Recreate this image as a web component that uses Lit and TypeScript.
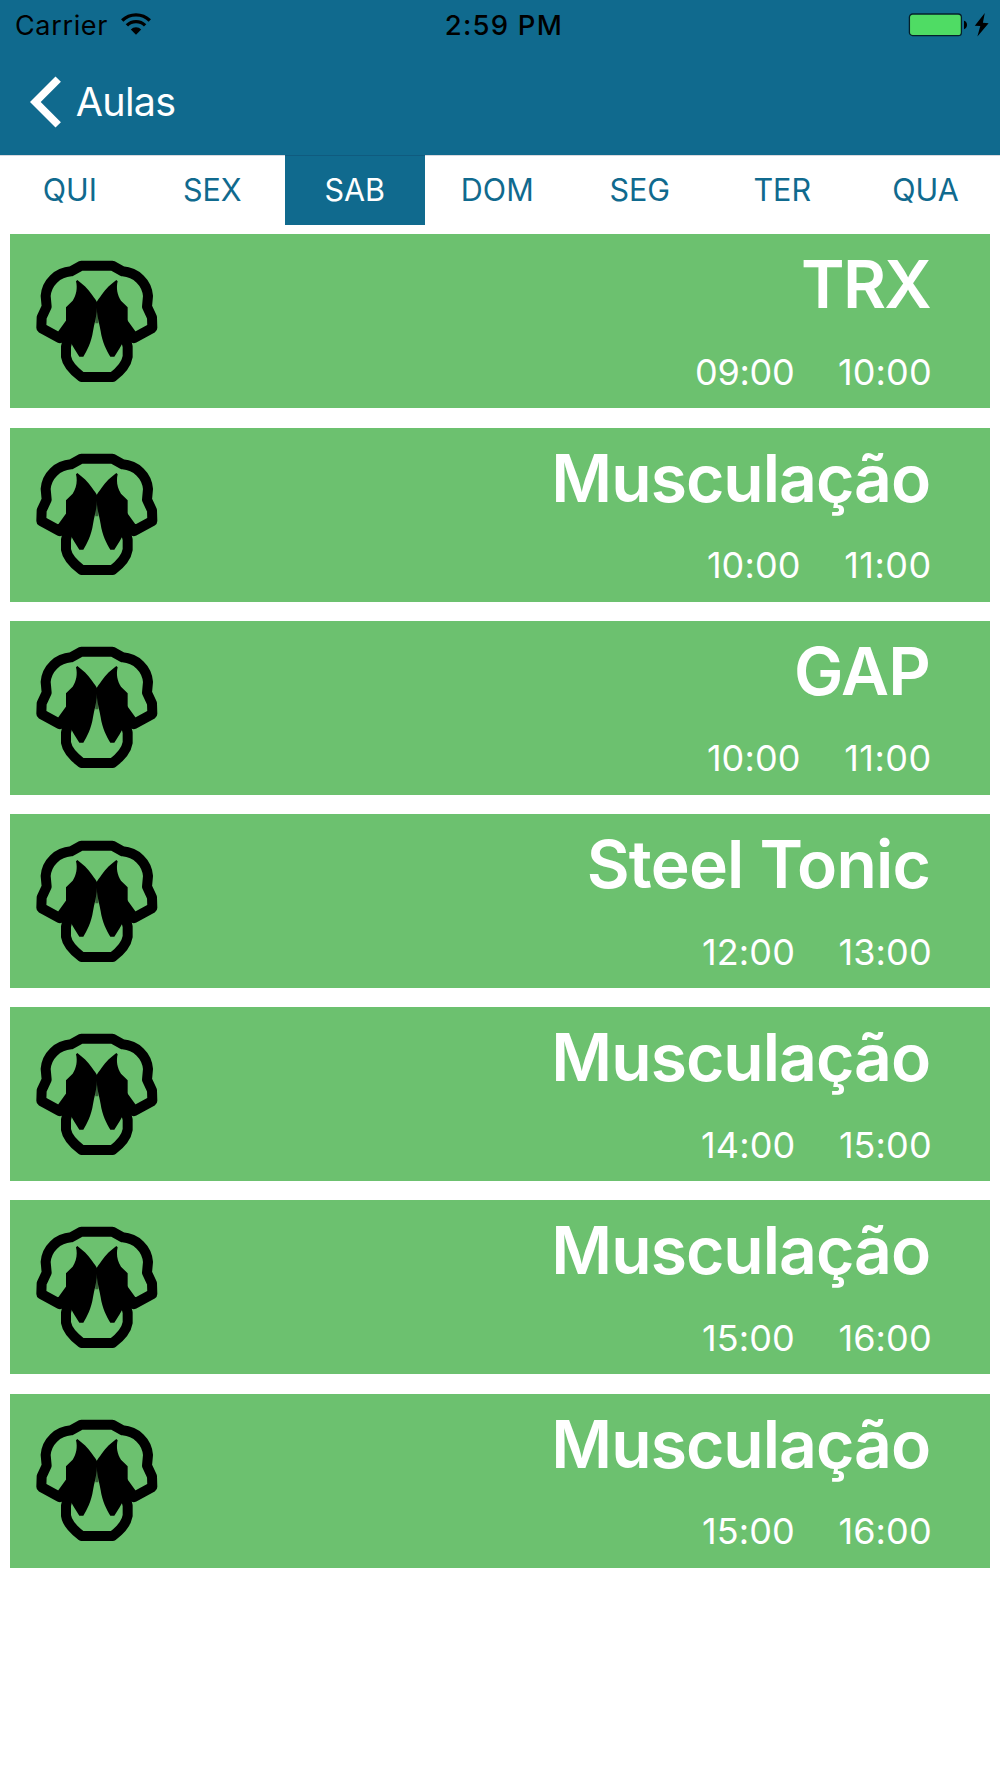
import { LitElement, html, css, svg } from "lit";
import { customElement, property, state } from "lit/decorators.js";

interface GymClass {
  name: string;
  start: string;
  end: string;
  tracking: number;
}

const DAYS = ["QUI", "SEX", "SAB", "DOM", "SEG", "TER", "QUA"];

const CLASSES: GymClass[] = [
  { name: "TRX", start: "09:00", end: "10:00", tracking: -1.7 },
  { name: "Musculação", start: "10:00", end: "11:00", tracking: -1 },
  { name: "GAP", start: "10:00", end: "11:00", tracking: -0.7 },
  { name: "Steel Tonic", start: "12:00", end: "13:00", tracking: -0.8 },
  { name: "Musculação", start: "14:00", end: "15:00", tracking: -1 },
  { name: "Musculação", start: "15:00", end: "16:00", tracking: -1 },
  { name: "Musculação", start: "15:00", end: "16:00", tracking: -1 },
];

// Wide zeros and narrow ones are evened out so the time columns stay aligned.
const timeTracking = (t: string) => (t.startsWith("0") ? -0.3 : t.startsWith("11") ? 0.5 : 0.1);

// One leaf of the figure in the middle of the class icon.
const leaf = svg`<path d="M172 120 C188 132 204 146 216 164 C223 175 230 180 232 190 L230 215 C228 235 222 255 219 274 C215 305 200 335 190 350 L178 350 L162 325 L148 300 L138 272 L138 202 L158 182 C169 165 173 145 168 124 Z" fill="#000"/>`;

@customElement("status-bar")
export class StatusBar extends LitElement {
  static styles = css`
    :host {
      display: grid;
      grid-template-columns: 1fr auto 1fr;
      align-items: center;
      height: 52px;
      padding: 0 11.2px 0 15px;
      font-size: 27px;
      line-height: 52px;
      color: #000;
    }
    .left {
      display: flex;
      align-items: center;
      gap: 12.8px;
      letter-spacing: 0.65px;
    }
    .clock {
      font-size: 27.5px;
      font-weight: 500;
      line-height: 50px;
      letter-spacing: 1.25px;
      padding: 0 0 2px 4px;
    }
    .right {
      display: flex;
      justify-content: flex-end;
      align-items: center;
    }
    .wifi,
    .battery {
      display: block;
      flex: none;
    }
    .wifi {
      margin-top: -5px;
    }
    .battery {
      margin-top: -3px;
    }
  `;

  render() {
    return html`
      <div class="left">
        <span>Carrier</span>
        <svg class="wifi" width="30" height="22" viewBox="0 0 30 22">
          <g fill="none" stroke="#000" stroke-width="3.3">
            <path d="M1.2 7.5 A19.6 19.6 0 0 1 28.8 7.5" />
            <path d="M5.9 12.3 A12.9 12.9 0 0 1 24.1 12.3" />
          </g>
          <path d="M15 21.8 L9.8 16.5 A7.4 7.4 0 0 1 20.2 16.5 Z" fill="#000" />
        </svg>
      </div>
      <div class="clock">2:59 PM</div>
      <div class="right">
        <svg class="battery" width="81" height="24" viewBox="0 0 81 24">
          <rect x="1.4" y="1" width="52" height="21.6" rx="3.2" fill="#4fdc64" stroke="#04202c" stroke-width="1.3" />
          <path d="M56 7.8 C60 8.6 60 15.4 56 16.2 Z" fill="#000" />
          <path d="M76.8 0 L66.8 12.7 L72.3 13 L69.4 23.5 L80.6 10.2 L74.9 9.8 Z" fill="#000" />
        </svg>
      </div>
    `;
  }
}

@customElement("nav-bar")
export class NavBar extends LitElement {
  @property() label = "";

  static styles = css`
    :host {
      display: flex;
      align-items: center;
      gap: 14.8px;
      height: 100px;
      padding: 0 30px 3px;
      color: #fff;
      font-size: 39.5px;
      letter-spacing: -0.7px;
    }
    .chevron {
      display: block;
    }
    .label {
      line-height: 48px;
    }
  `;

  render() {
    return html`
      <svg class="chevron" width="31" height="52" viewBox="0 0 31 52">
        <path d="M0 26 L25.5 0.4 L30.9 5.7 L10.7 26 L30.9 46.3 L25.5 51.6 Z" fill="#fff" />
      </svg>
      <span class="label">${this.label}</span>
    `;
  }
}

@customElement("day-tabs")
export class DayTabs extends LitElement {
  @property({ type: Array }) days: string[] = [];
  @property() selected = "";

  static styles = css`
    :host {
      display: flex;
      gap: 2.5px;
      height: 69.6px;
    }
    .tab {
      flex: 0 0 140px;
      border: 0;
      padding: 0 0.5px 0 0;
      background: #fff;
      color: #106a8e;
      font: 400 30.5px/68px Inter, "Liberation Sans", sans-serif;
      text-align: center;
    }
    .tab:last-child {
      padding: 0 0 0 1px;
    }
    .tab.on {
      background: #106a8e;
      color: #fff;
    }
  `;

  render() {
    return html`${this.days.map(
      (d) => html`<button class="tab ${d === this.selected ? "on" : ""}" @click=${() => this.pick(d)}>${d}</button>`
    )}`;
  }

  private pick(day: string) {
    this.dispatchEvent(new CustomEvent("pick", { detail: day }));
  }
}

@customElement("class-card")
export class ClassCard extends LitElement {
  @property({ type: Object }) item!: GymClass;

  static styles = css`
    :host {
      display: flex;
      justify-content: space-between;
      align-items: flex-start;
      box-sizing: border-box;
      height: 174px;
      padding: 10.1px 59.9px 0 20px;
      background: #6cc16f;
      color: #fff;
    }
    .icon {
      display: block;
      margin-top: 10.6px;
      filter: blur(0.7px);
    }
    .text {
      display: flex;
      flex-direction: column;
      align-items: flex-end;
      gap: 25.6px;
    }
    .name {
      font-size: 66px;
      font-weight: 600;
      line-height: 80px;
      white-space: nowrap;
    }
    .times {
      display: flex;
      gap: 43.6px;
      margin-right: -1.6px;
      font-size: 36px;
      line-height: 44px;
    }
  `;

  render() {
    const { name, start, end, tracking } = this.item;
    return html`
      <svg class="icon" width="133.333" height="133.333" viewBox="30 45 400 400">
        <g fill="none" stroke="#000" stroke-width="30" stroke-linejoin="round">
          <path
            d="M152 248 L119 294 L64 264 L65 232 L80 200 L77 168 C80 128 112 97 153 94 L184 77 H277 L308 94 C349 97 381 128 384 168 L381 200 L396 232 L397 264 L342 294 L309 248"
          />
          <path d="M152 262 L138 320 V350 C142 375 165 396 185 411 H278 C298 396 319 375 323 350 V320 L309 262" />
        </g>
        ${leaf}
        <g transform="matrix(-1 0 0 1 461 0)">${leaf}</g>
        <path d="M224 195 H237 L235 250 H226 Z" fill="#000" opacity="0.5" />
      </svg>
      <div class="text">
        <div class="name" style="letter-spacing:${tracking}px">${name}</div>
        <div class="times">
          ${[start, end].map((t) => html`<span style="letter-spacing:${timeTracking(t)}px">${t}</span>`)}
        </div>
      </div>
    `;
  }
}

@customElement("app-root")
export class AppRoot extends LitElement {
  @state() private day = "SAB";

  static styles = css`
    :host {
      display: block;
      min-height: 1778px;
      background: #fff;
      font-family: Inter, "Liberation Sans", sans-serif;
    }
    .header {
      box-sizing: border-box;
      height: 155px;
      position: relative;
      background: #106a8e;
      box-shadow: 0 1px 0 rgba(10, 10, 50, 0.16);
    }
    .list {
      display: flex;
      flex-direction: column;
      gap: 19.2px;
      padding: 9.8px 10px 0;
    }
  `;

  render() {
    return html`
      <header class="header">
        <status-bar></status-bar>
        <nav-bar label="Aulas"></nav-bar>
      </header>
      <day-tabs
        .days=${DAYS}
        .selected=${this.day}
        @pick=${(e: CustomEvent<string>) => (this.day = e.detail)}
      ></day-tabs>
      <main class="list">${CLASSES.map((c) => html`<class-card .item=${c}></class-card>`)}</main>
    `;
  }
}
